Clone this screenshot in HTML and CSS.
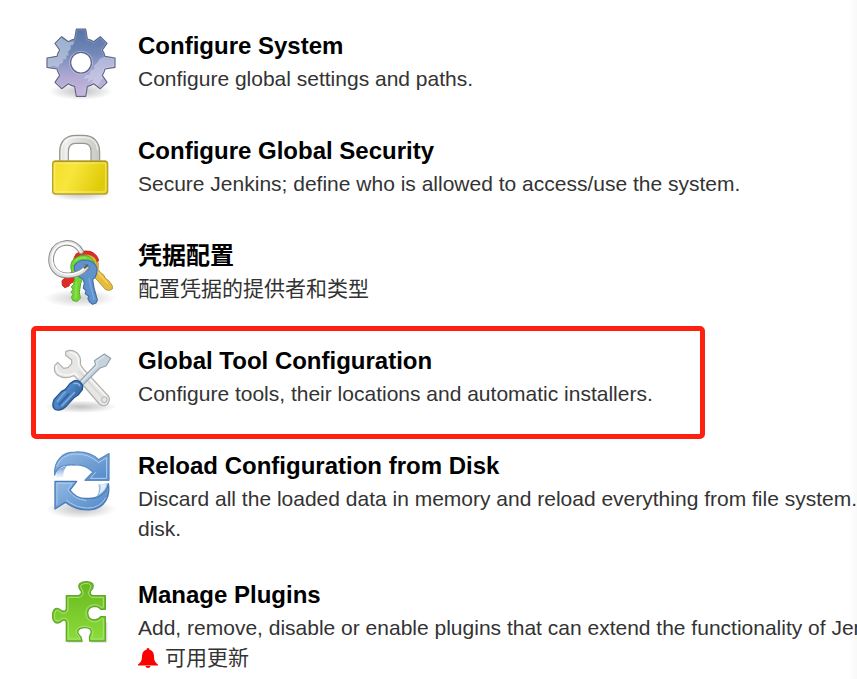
FILE: index.html
```html
<!DOCTYPE html>
<html lang="zh-CN">
<head>
<meta charset="utf-8">
<title>Manage Jenkins</title>
<link rel="stylesheet" href="styles.css">
</head>
<body>
<main class="manage">
  <section class="item">
    <svg class="icon" viewBox="24 36 216 216" aria-hidden="true">
      <defs>
        <linearGradient id="gearFill" x1="0" y1="0" x2="0" y2="1"><stop offset="0" stop-color="#5673a6"/><stop offset=".35" stop-color="#7187b7"/><stop offset=".65" stop-color="#a5a4cf"/><stop offset="1" stop-color="#cdbcdf"/></linearGradient>
        <radialGradient id="shade"><stop offset="0" stop-color="#000" stop-opacity=".24"/><stop offset=".5" stop-color="#000" stop-opacity=".13"/><stop offset="1" stop-color="#000" stop-opacity="0"/></radialGradient>
        <clipPath id="gearClip"><path d="M116 69L121 39H149L154 69Q164 71 173 77L193 62L213 82L199 102Q205 111 207 121L237 126V154L207 159Q205 169 199 178L213 199L193 218L173 203Q164 209 154 211L149 241H121L116 211Q106 209 97 203L77 218L57 199L71 178Q65 169 63 159L33 154V126L63 121Q65 111 71 102L57 82L77 62L97 77Q106 71 116 69Z"/></clipPath>
      </defs>
      <ellipse cx="135" cy="226" rx="96" ry="26" fill="url(#shade)"/>
      <path fill="url(#gearFill)" d="M116 69L121 39H149L154 69Q164 71 173 77L193 62L213 82L199 102Q205 111 207 121L237 126V154L207 159Q205 169 199 178L213 199L193 218L173 203Q164 209 154 211L149 241H121L116 211Q106 209 97 203L77 218L57 199L71 178Q65 169 63 159L33 154V126L63 121Q65 111 71 102L57 82L77 62L97 77Q106 71 116 69Z"/>
      <g clip-path="url(#gearClip)">
        <path fill="#c6d6e4" opacity=".6" d="M30 50H82L78 68L98 79L116 76L110 88H104V100L97 106V120L91 117V131L83 128L80 141L72 144L67 154L52 149L30 157Z"/>
        <path fill="#d9dcef" opacity=".5" d="M240 117L208 121L191 128L185 139L174 149L175 159L165 163L160 176L149 178L142 190L158 186L155 198L171 190L166 207L182 214L203 184L208 160L240 155Z"/>
        <path fill="#bda9d3" opacity=".3" d="M62 166L90 180L115 183L143 180L137 212L149 245H118L110 211L65 219Z"/>
      </g>
      <path fill="none" stroke="#eef0ff" stroke-opacity=".25" stroke-width="8" clip-path="url(#gearClip)" d="M116 69L121 39H149L154 69Q164 71 173 77L193 62L213 82L199 102Q205 111 207 121L237 126V154L207 159Q205 169 199 178L213 199L193 218L173 203Q164 209 154 211L149 241H121L116 211Q106 209 97 203L77 218L57 199L71 178Q65 169 63 159L33 154V126L63 121Q65 111 71 102L57 82L77 62L97 77Q106 71 116 69Z"/>
      <path fill="none" stroke="#5d6588" stroke-width="3.5" stroke-linejoin="round" d="M116 69L121 39H149L154 69Q164 71 173 77L193 62L213 82L199 102Q205 111 207 121L237 126V154L207 159Q205 169 199 178L213 199L193 218L173 203Q164 209 154 211L149 241H121L116 211Q106 209 97 203L77 218L57 199L71 178Q65 169 63 159L33 154V126L63 121Q65 111 71 102L57 82L77 62L97 77Q106 71 116 69Z"/>
      <circle cx="135" cy="140" r="34" fill="none" stroke="#cdd4eb" stroke-opacity=".5" stroke-width="4"/>
      <circle cx="135" cy="140" r="31" fill="#fff" stroke="#5d6588" stroke-width="3.5"/>
    </svg>
    <div class="text">
      <h2><a href="#configure">Configure System</a></h2>
      <p>Configure global settings and paths.</p>
    </div>
  </section>

  <section class="item">
    <svg class="icon" viewBox="24 33 216 216" aria-hidden="true">
      <defs>
        <linearGradient id="lockFill" x1="0" y1="0" x2="1" y2=".25"><stop offset="0" stop-color="#f3de2a"/><stop offset=".4" stop-color="#f8e63c"/><stop offset="1" stop-color="#e0cb08"/></linearGradient>
        <linearGradient id="shackle" x1="0" y1="0" x2="1" y2="0"><stop offset="0" stop-color="#d2d4cf"/><stop offset=".15" stop-color="#f0f0ee"/><stop offset=".5" stop-color="#dcdedb"/><stop offset="1" stop-color="#c7cac4"/></linearGradient>
      </defs>
      <ellipse cx="133" cy="214" rx="92" ry="23" fill="url(#shade)"/>
      <path fill="url(#shackle)" stroke="#949691" stroke-width="3.5" d="M71 119V90C71 57 91 40 120 40H142C173 40 191 59 191 90V119H165V88C165 72 156 64 143 64H119C105 64 97 73 97 89V119Z"/>
      <path fill="none" stroke="#fff" stroke-opacity=".6" stroke-width="4" d="M77 115V90C77 61 94 47 120 46H142C168 46 183 61 185 85"/>
      <rect x="50" y="117" width="165" height="99" rx="9" fill="url(#lockFill)" stroke="#b6a22c" stroke-width="4"/>
      <rect x="56" y="123" width="153" height="87" rx="5" fill="none" stroke="#fff6a0" stroke-opacity=".5" stroke-width="4"/>
      <path d="M56 119H209" stroke="#9a8428" stroke-width="3" opacity=".65"/>
    </svg>
    <div class="text">
      <h2><a href="#security">Configure Global Security</a></h2>
      <p>Secure Jenkins; define who is allowed to access/use the system.</p>
    </div>
  </section>

  <section class="item">
    <svg class="icon" viewBox="24 30 216 216" aria-hidden="true">
      <ellipse cx="132" cy="211" rx="108" ry="27" fill="url(#shade)" opacity=".75"/>
      <path fill="#e4bd3c" stroke="#b9933a" stroke-width="3" stroke-linejoin="round" d="M136 80Q160 72 179 87Q191 103 186 124L194 134L204 142L208 151L218 158L229 173V183L219 187L209 185L168 139Q138 129 132 108Z"/>
      <path fill="none" stroke="#f0d678" stroke-width="4" d="M182 129L215 166"/>
      <path fill="#e02a25" stroke="#c02a22" stroke-width="3" stroke-linejoin="round" d="M121 77Q140 65 162 70Q184 78 188 98L180 101L133 128L111 162L101 168L99 174L86 179L79 172L78 158L86 151L117 124Q105 100 121 77Z"/>
      <path fill="#e4bd3c" stroke="#b9933a" stroke-width="2" d="M139 82Q164 76 179 94Q185 108 177 128L161 117Z"/>
      <path fill="#73d631" stroke="#5aa926" stroke-width="3" stroke-linejoin="round" d="M109 98Q132 76 156 84Q174 93 177 110L145 139L134 166L130 194L133 210L124 220L111 218L106 208L111 199L105 193L111 184L106 177L113 169L116 148Q97 118 109 98Z"/>
      <path fill="none" stroke="#94e35c" stroke-width="4" d="M121 161L119 211M117 98Q134 84 151 92"/>
      <path fill="#6093ce" stroke="#416fa6" stroke-width="3.5" stroke-linejoin="round" d="M115 113Q126 96 147 96Q173 97 182 118Q187 141 170 155L174 180L184 216L180 225L170 229L161 222L156 212L158 204L148 197L150 188L142 180L145 165L141 153Q112 143 115 113Z"/>
      <path fill="none" stroke="#7da9db" stroke-width="4" d="M159 151L174 216"/>
      <ellipse cx="151" cy="119" rx="9" ry="9" fill="#dfe6ea" stroke="#466a96" stroke-width="3"/>
      <path fill="none" stroke="#8b8e8c" stroke-width="17" stroke-linecap="round" d="M135 70C113 33 61 38 48 77C37 117 62 145 99 142C126 141 142 130 150 119"/>
      <path fill="none" stroke="#e2e3e1" stroke-width="11" stroke-linecap="round" d="M135 70C113 33 61 38 48 77C37 117 62 145 99 142C126 141 142 130 150 119"/>
      <path fill="none" stroke="#fff" stroke-width="4" d="M131 67C110 34 64 42 51 75C42 105 56 129 80 136C106 144 131 133 143 122"/>
      <path fill="none" stroke="#4c5960" stroke-width="6" stroke-linecap="round" d="M146 119L153 113"/>
    </svg>
    <div class="text">
      <h2><a href="#credentials">凭据配置</a></h2>
      <p>配置凭据的提供者和类型</p>
    </div>
  </section>

  <section class="item marked">
    <svg class="icon" viewBox="54 69 216 216" aria-hidden="true">
      <defs>
        <linearGradient id="handle" x1="0" y1="0" x2="1" y2=".7"><stop offset="0" stop-color="#306bb2"/><stop offset=".5" stop-color="#4f86c5"/><stop offset="1" stop-color="#275896"/></linearGradient>
      </defs>
      <ellipse cx="164" cy="260" rx="108" ry="19" fill="url(#shade)"/>
      <path fill="#e6e7e5" stroke="#afb1ad" stroke-width="3.5" stroke-linejoin="round" d="M119 95Q132 87 148 95Q168 105 163 134L174 149L248 229Q254 241 244 253Q233 262 220 252L158 180L143 167Q116 180 94 165Q82 155 86 137L95 127L113 145L126 143L137 131L137 120L119 106Z"/>
      <path fill="none" stroke="#fafafa" stroke-width="4" d="M132 97Q160 101 158 134L169 151L241 230M91 137Q89 157 110 164Q132 168 146 159L158 172"/>
      <path fill="none" stroke="#d4d6d4" stroke-width="4" d="M159 154L229 232"/>
      <ellipse cx="235" cy="239" rx="8" ry="9" fill="#e6e8e5" stroke="#b0b2ac" stroke-width="3"/>
      <path fill="#c6d3dd" stroke="#93a3b1" stroke-width="3.5" stroke-linejoin="round" d="M235 102L254 115L240 138L222 144L169 196L158 187L209 134L205 122Z"/>
      <path fill="none" stroke="#dde5eb" stroke-width="4" d="M235 108L211 124L214 137L167 185"/>
      <path fill="url(#handle)" stroke="#28558e" stroke-width="4" stroke-linejoin="round" d="M142 184Q152 178 163 187Q173 196 169 209L156 225L143 234L122 257Q104 275 87 268Q76 259 84 239L106 215L118 208L132 191Z"/>
      <path fill="none" stroke="#7ba7da" stroke-width="5" stroke-linecap="round" d="M94 244L117 216M108 257L145 218"/>
      <path fill="none" stroke="#2b62a6" stroke-width="5" stroke-linecap="round" d="M99 254L128 222"/>
      <path fill="none" stroke="#8fb5e2" stroke-width="4" stroke-linecap="round" d="M144 191Q158 187 162 198"/>
    </svg>
    <div class="text">
      <h2><a href="#tools">Global Tool Configuration</a></h2>
      <p>Configure tools, their locations and automatic installers.</p>
    </div>
  </section>

  <section class="item">
    <svg class="icon" viewBox="24 24 216 216" aria-hidden="true">
      <defs>
        <linearGradient id="arrowFill" x1="0" y1="0" x2="1" y2="1"><stop offset="0" stop-color="#93b9e3"/><stop offset="1" stop-color="#5389c7"/></linearGradient>
        <linearGradient id="tailFade" x1="0" y1="0" x2="0" y2="1"><stop offset="0" stop-color="#5b8cc7"/><stop offset="1" stop-color="#8cb2df" stop-opacity="0"/></linearGradient>
      </defs>
      <ellipse cx="135" cy="207" rx="104" ry="29" fill="url(#shade)"/>
      <path fill="#fff" d="M80 83L114 75L158 94L149 119L196 124L188 165L155 176L117 167L104 143L121 122L84 118Z"/>
      <path fill="url(#tailFade)" d="M60 90L93 77Q79 93 82 112L62 116Z"/>
      <path fill="url(#arrowFill)" stroke="#5c8dc5" stroke-width="4" stroke-linejoin="round" d="M56 105C53 62 79 36 119 36C151 34 173 45 188 59L219 41V121H147L171 96C153 78 134 73 114 75C85 73 62 81 56 105Z"/>
      <path fill="none" stroke="#b2cfee" stroke-width="3" d="M62 79Q77 43 117 42Q157 40 188 68L212 53V115H163L179 97"/>
      <path fill="url(#arrowFill)" stroke="#477bb8" stroke-width="4" stroke-linejoin="round" d="M57 124H122L102 150C116 171 135 177 157 175C185 176 211 163 217 131C224 172 204 204 166 209C134 212 110 204 88 187L57 207Z"/>
      <path fill="none" stroke="#a6c8ec" stroke-width="3" d="M63 195V130H109L95 149Q114 178 151 182M90 179Q119 204 155 204Q193 204 210 172"/>
      <path fill="url(#arrowFill)" opacity=".8" d="M178 174Q194 158 187 133Q201 134 216 130Q211 160 178 174Z"/>
      <path fill="#fff" opacity=".75" d="M188 164Q196 150 193 133H212Q209 151 188 164Z"/>
    </svg>
    <div class="text">
      <h2><a href="#reload">Reload Configuration from Disk</a></h2>
      <p>Discard all the loaded data in memory and reload everything from file system.<br>disk.</p>
    </div>
  </section>

  <section class="item">
    <svg class="icon" viewBox="24 27 216 216" aria-hidden="true">
      <defs>
        <linearGradient id="plugFill" x1="0" y1="0" x2="0" y2="1"><stop offset="0" stop-color="#69b71d"/><stop offset="1" stop-color="#8bdd3a"/></linearGradient>
      </defs>
      <path fill="none" stroke="#000" stroke-opacity=".13" stroke-width="6" d="M94 221H142M164 221H211V163"/>
      <path fill="url(#plugFill)" stroke="#62a82b" stroke-width="4" stroke-linejoin="round" d="M91 83H128Q139 79 136 70Q124 57 131 47Q138 41 151 41Q165 41 170 48Q175 57 164 69Q159 81 171 83H208V124H195Q188 115 177 115Q157 116 155 134Q156 156 177 156Q188 155 194 146H208V219H161Q158 208 163 199Q170 190 161 182Q148 176 132 182Q121 189 128 199Q137 207 138 219H91V163Q89 154 80 157Q68 169 57 163Q49 156 50 142Q50 126 59 122Q67 119 78 129Q89 132 91 123Z"/>
      <path fill="none" stroke="#aae278" stroke-width="3" stroke-linejoin="round" d="M96 88H131Q145 82 140 69Q131 56 136 50Q144 45 158 47Q170 53 160 67Q153 80 167 88H202V118H196Q187 110 176 110Q151 112 149 134Q150 160 176 162Q189 161 198 152H202V213H167Q167 207 170 198Q174 186 164 179Q149 171 131 177Q117 183 122 197Q131 204 132 213H97V162Q94 147 79 151Q68 163 60 157Q53 151 56 137Q58 125 65 127L77 135Q92 139 96 126Z"/>
    </svg>
    <div class="text">
      <h2><a href="#plugins">Manage Plugins</a></h2>
      <p>Add, remove, disable or enable plugins that can extend the functionality of Jenkins.</p>
      <p class="update"><svg class="bell" viewBox="0 0 20 20" aria-hidden="true"><path d="M10 0C11 0 11.500 .8 11.500 1.700C14.500 2.400 16 5 16 8C16 12.500 17 14.200 20 16.500V17.500H0V16.500C3 14.200 4 12.500 4 8C4 5 5.500 2.400 8.500 1.700C8.500 .8 9 0 10 0ZM7.300 18H12.700Q12 20 10 20T7.300 18Z"/></svg>可用更新</p>
    </div>
  </section>
</main>
</body>
</html>
```
FILE: styles.css
```css
* {
  box-sizing: border-box;
}

body {
  margin: 0;
  min-height: 100vh;
  overflow: hidden;
  background: linear-gradient(to left, #f8f8f8, #fff 8px);
  color: #333;
  font-family: "Liberation Sans", "Noto Sans CJK SC", sans-serif;
  font-size: 21px;
  line-height: 30px;
}

.manage {
  display: flex;
  flex-direction: column;
  gap: 33px;
  padding: 28px 0 0 44px;
}

.item {
  display: flex;
  align-items: flex-start;
  gap: 22px;
}

.icon {
  flex: none;
  width: 72px;
  height: 72px;
  overflow: visible;
}

.text {
  white-space: nowrap;
}

h2,
p {
  margin: 0;
}

h2 {
  font-size: 24px;
  line-height: 36px;
}

h2 a {
  color: #000;
  text-decoration: none;
}

/* Frame drawn around the entry being pointed out */
.marked {
  position: relative;
  width: fit-content;
}

.marked::after {
  content: "";
  position: absolute;
  inset: -17px -52px -24px -13px;
  border: 5px solid #ff2010;
  border-radius: 5px;
  pointer-events: none;
}

.update {
  display: flex;
  align-items: center;
  gap: 7px;
}

.bell {
  width: 20px;
  height: 20px;
  fill: #f00;
}
```
